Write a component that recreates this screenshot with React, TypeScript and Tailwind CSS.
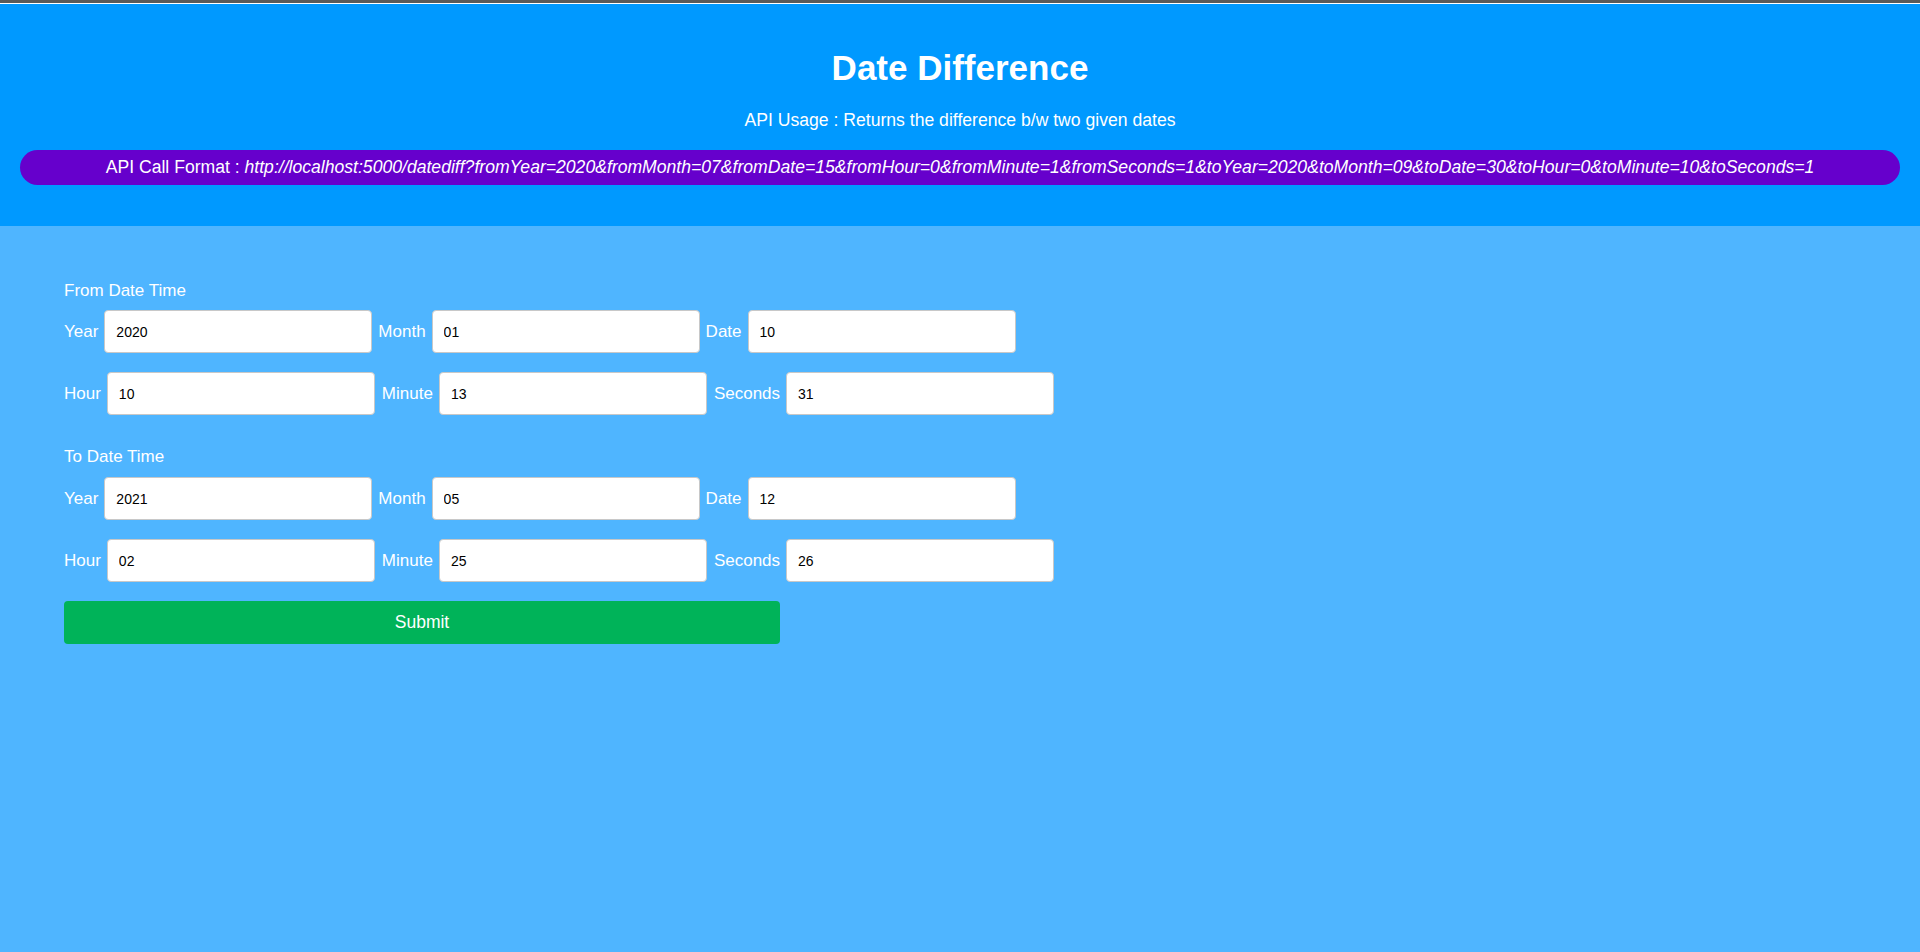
import React from "react";

const font = { fontFamily: '"Liberation Sans", Arial, sans-serif' };

function Field({ label, value }: { label: string; value: string }) {
  return (
    <div className="flex items-center gap-[6px]">
      <label className="text-[17px] leading-[20px] text-white">{label}</label>
      <input
        type="text"
        defaultValue={value}
        className="h-[43px] w-[268px] rounded-[4px] border border-[#c8c8c8] bg-white px-[11px] text-[14px] text-black outline-none"
        style={font}
      />
    </div>
  );
}

function Row({ items, tight }: { items: [string, string][]; tight?: boolean }) {
  return (
    <div className={tight ? "flex items-center gap-[6px]" : "flex items-center gap-[7px]"}>
      {items.map(([l, v]) => (
        <Field key={l} label={l} value={v} />
      ))}
    </div>
  );
}

export default function App() {
  return (
    <div className="flex min-h-[952px] flex-col bg-[#4fb5ff]" style={font}>
      <div className="h-[3px] bg-[#5a5a5a]" />
      <div className="h-[1px] bg-white" />
      <header className="flex flex-col items-center bg-[#0099ff] px-[20px] pt-[44px] pb-[41px] text-white">
        <h1 className="text-[35px] font-bold leading-[40px]">Date Difference</h1>
        <p className="mt-[23px] text-[17.6px] leading-[19px]">
          API Usage : Returns the difference b/w two given dates
        </p>
        <div className="mt-[20px] flex h-[35px] w-full items-center justify-center rounded-full bg-[#6600cc] text-[17.6px]">
          <span>
            API Call Format :{" "}
            <i>
              http://localhost:5000/datediff?fromYear=2020&amp;fromMonth=07&amp;fromDate=15&amp;fromHour=0&amp;fromMinute=1&amp;fromSeconds=1&amp;toYear=2020&amp;toMonth=09&amp;toDate=30&amp;toHour=0&amp;toMinute=10&amp;toSeconds=1
            </i>
          </span>
        </div>
      </header>
      <main className="flex flex-col px-[64px] pt-[55px]">
        <div className="text-[17px] leading-[20px] text-white">From Date Time</div>
        <div className="mt-[9px] flex flex-col gap-[19px]">
          <Row tight items={[["Year", "2020"], ["Month", "01"], ["Date", "10"]]} />
          <Row items={[["Hour", "10"], ["Minute", "13"], ["Seconds", "31"]]} />
        </div>
        <div className="mt-[32px] text-[17px] leading-[20px] text-white">To Date Time</div>
        <div className="mt-[10px] flex flex-col gap-[19px]">
          <Row tight items={[["Year", "2021"], ["Month", "05"], ["Date", "12"]]} />
          <Row items={[["Hour", "02"], ["Minute", "25"], ["Seconds", "26"]]} />
        </div>
        <button
          type="button"
          className="mt-[19px] h-[43px] w-[716px] rounded-[4px] bg-[#00b359] text-[17.5px] text-white"
        >
          Submit
        </button>
      </main>
    </div>
  );
}
